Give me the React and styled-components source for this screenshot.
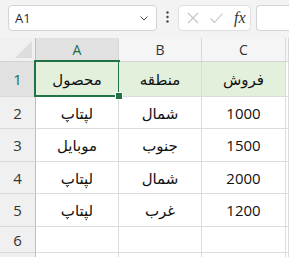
import { Fragment } from "react";
import styled, { createGlobalStyle } from "styled-components";

const rows = [
  { n: 1, cells: ["محصول", "منطقه", "فروش"], head: true, h: 35 },
  { n: 2, cells: ["لپتاپ", "شمال", "1000"], h: 32 },
  { n: 3, cells: ["موبایل", "جنوب", "1500"], h: 33 },
  { n: 4, cells: ["لپتاپ", "شمال", "2000"], h: 32 },
  { n: 5, cells: ["لپتاپ", "غرب", "1200"], h: 33 },
  { n: 6, cells: ["", "", ""], h: 26 },
  { n: null, cells: ["", "", ""], h: 26 },
];

const GlobalStyle = createGlobalStyle`
  body {
    margin: 0;
    background: #ffffff;
    font-family: "Noto Sans", "DejaVu Sans", sans-serif;
    overflow: hidden;
  }
`;

const Page = styled.div`
  width: 289px;
  height: 257px;
  overflow: hidden;
`;

const Toolbar = styled.div`
  height: 38px;
  background: #f3f3f3;
  display: flex;
  align-items: flex-start;
  padding: 5px 0 0 8px;
  box-sizing: border-box;
`;

const NameBox = styled.div`
  width: 149px;
  height: 26px;
  box-sizing: border-box;
  background: #fff;
  border: 1px solid #d4d4d4;
  border-radius: 4px;
  display: flex;
  align-items: center;
  justify-content: space-between;
  padding: 0 6px;
  font-family: "Open Sans", "Noto Sans", sans-serif;
  font-size: 13px;
  color: #1f1f1f;
`;

const Dots = styled.div`
  width: 21px;
  display: flex;
  justify-content: center;
  padding-top: 6px;
`;

const FormulaButtons = styled.div`
  width: 73px;
  height: 26px;
  box-sizing: border-box;
  background: #fff;
  border: 1px solid #e0e0e0;
  border-radius: 4px;
  display: flex;
  align-items: center;
  padding: 0 4px 0 7px;
  gap: 9px;
`;

const Fx = styled.span`
  font-family: "Liberation Serif", "DejaVu Serif", serif;
  font-style: italic;
  font-size: 16px;
  color: #333;
  margin-left: 1px;
`;

const FormulaInput = styled.div`
  margin-left: 5px;
  flex: 1;
  height: 26px;
  box-sizing: border-box;
  background: #fff;
  border: 1px solid #d4d4d4;
  border-right: none;
  border-radius: 4px 0 0 4px;
`;

const Grid = styled.div`
  display: grid;
  grid-template-columns: 36px 83px 83px 84px 1fr;
`;

const Corner = styled.div`
  height: 24px;
  box-sizing: border-box;
  background: #f0f0f0;
  border-right: 1px solid #bdbdbd;
  border-bottom: 1px solid #d4d4d4;
  position: relative;
  &::after {
    content: "";
    position: absolute;
    right: 3px;
    bottom: 3px;
    width: 0;
    height: 0;
    border-left: 17px solid transparent;
    border-bottom: 17px solid #dcdcdc;
  }
`;

const ColHead = styled.div`
  height: 24px;
  box-sizing: border-box;
  background: ${(p) => (p.$active ? "#e1e1e1" : "#f5f5f5")};
  border-right: 1px solid #d8d8d8;
  border-bottom: 1px solid #d4d4d4;
  display: flex;
  align-items: center;
  justify-content: center;
  font-family: "Open Sans", "Noto Sans", sans-serif;
  font-size: 14px;
  color: ${(p) => (p.$active ? "#1a6e4c" : "#333")};
`;

const RowHead = styled.div`
  height: ${(p) => p.$h}px;
  box-sizing: border-box;
  background: ${(p) => (p.$active ? "#e1e1e1" : "#f0f0f0")};
  border-right: 1px solid #bdbdbd;
  border-bottom: 1px solid #d8d8d8;
  display: flex;
  align-items: center;
  justify-content: center;
  font-family: "Open Sans", "Noto Sans", sans-serif;
  font-size: 15px;
  color: ${(p) => (p.$active ? "#1a6e4c" : "#333")};
`;

const Cell = styled.div`
  height: ${(p) => p.$h}px;
  box-sizing: border-box;
  background: ${(p) => (p.$head ? "#e3f0dc" : "#fff")};
  border-right: 1px solid #dcdcdc;
  border-bottom: 1px solid #dcdcdc;
  display: flex;
  align-items: center;
  justify-content: center;
  font-family: "Open Sans", "Noto Sans", "DejaVu Sans", sans-serif;
  font-size: 15px;
  color: #111;
  position: relative;
  ${(p) =>
    p.$selected &&
    `
    &::before {
      content: "";
      position: absolute;
      top: -2px;
      left: -2px;
      right: -2px;
      bottom: -1px;
      border: 2px solid #217346;
      pointer-events: none;
    }
    &::after {
      content: "";
      position: absolute;
      right: -5px;
      bottom: -4px;
      width: 6px;
      height: 6px;
      background: #217346;
      border: 1px solid #fff;
      z-index: 2;
    }
  `}
`;

const ChevronDown = () => (
  <svg width="12" height="12" viewBox="0 0 12 12">
    <path d="M2.5 4.5 L6 8 L9.5 4.5" fill="none" stroke="#444" strokeWidth="1" />
  </svg>
);

const VDots = () => (
  <svg width="3" height="12" viewBox="0 0 3 12">
    <circle cx="1.5" cy="1.5" r="1.2" fill="#444" />
    <circle cx="1.5" cy="6" r="1.2" fill="#444" />
    <circle cx="1.5" cy="10.5" r="1.2" fill="#444" />
  </svg>
);

const Cross = () => (
  <svg width="14" height="14" viewBox="0 0 14 14">
    <path d="M2 2 L12 12 M12 2 L2 12" stroke="#c4c4c4" strokeWidth="1.1" />
  </svg>
);

const Check = () => (
  <svg width="15" height="14" viewBox="0 0 15 14">
    <path d="M1.5 7.5 L5.5 11.5 L13.5 2.5" fill="none" stroke="#c4c4c4" strokeWidth="1.1" />
  </svg>
);

const App = () => {
  return (
    <Page>
      <GlobalStyle />
      <Toolbar>
        <NameBox>
          <span>A1</span>
          <ChevronDown />
        </NameBox>
        <Dots>
          <VDots />
        </Dots>
        <FormulaButtons>
          <Cross />
          <Check />
          <Fx>fx</Fx>
        </FormulaButtons>
        <FormulaInput />
      </Toolbar>
      <Grid>
        <Corner />
        {["A", "B", "C"].map((c) => (
          <ColHead key={c} $active={c === "A"}>
            {c}
          </ColHead>
        ))}
        <ColHead />
        {rows.map((r, ri) => (
          <Fragment key={ri}>
            <RowHead $h={r.h} $active={r.n === 1}>
              {r.n}
            </RowHead>
            {r.cells.map((v, i) => (
              <Cell
                key={i}
                $h={r.h}
                $head={r.head}
                $selected={r.n === 1 && i === 0}
              >
                {v}
              </Cell>
            ))}
            <Cell $h={r.h} />
          </Fragment>
        ))}
      </Grid>
    </Page>
  );
};

export default App;
